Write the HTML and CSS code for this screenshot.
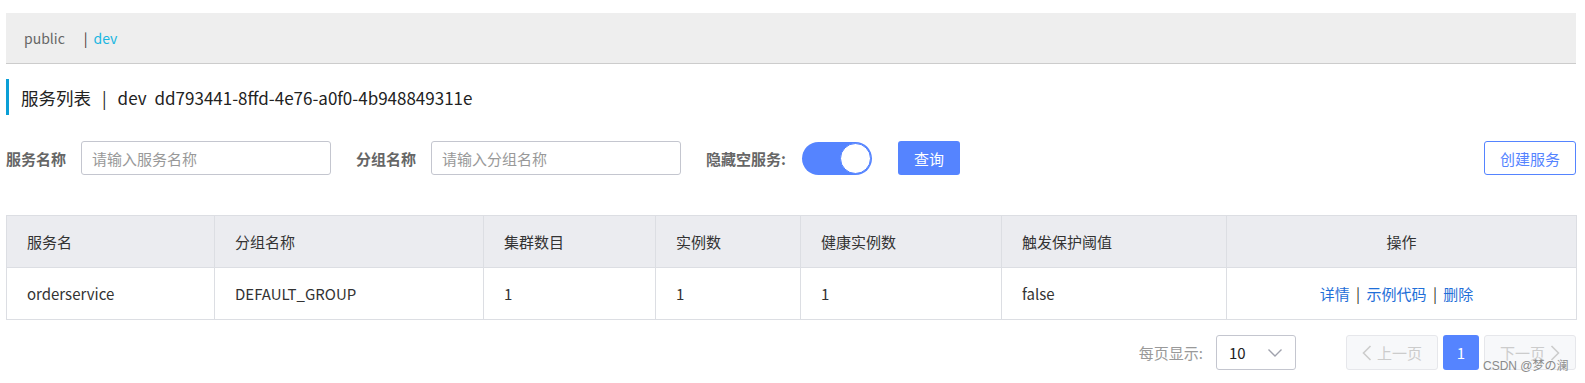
FILE: index.html
```html
<!DOCTYPE html>
<html lang="zh-CN">
<head>
    <meta charset="UTF-8">
    <meta name="viewport" content="width=device-width, initial-scale=1.0">
    <title>服务列表</title>
    <link rel="stylesheet" href="styles.css">
</head>
<body>

    <div class="page">
        <div class="ns-bar">
            <span class="ns-item">public</span>
            <span class="ns-sep">|</span>
            <span class="ns-item ns-active">dev</span>
        </div>

        <h1 class="page-title">
            <span class="title-main">服务列表</span>
            <span class="title-sep">|</span>
            <span class="title-ns">dev</span>
            <span class="title-id">dd793441-8ffd-4e76-a0f0-4b948849311e</span>
        </h1>

        <div class="filters">
            <span class="filter-label">服务名称</span>
            <input class="text-input" type="text" placeholder="请输入服务名称">
            <span class="filter-label">分组名称</span>
            <input class="text-input" type="text" placeholder="请输入分组名称">
            <span class="filter-label">隐藏空服务:</span>
            <span class="switch"><span class="switch-knob"></span></span>
            <button class="btn btn-primary">查询</button>
            <button class="btn btn-outline">创建服务</button>
        </div>

        <table class="service-table">
            <colgroup>
                <col style="width: 208px">
                <col style="width: 269px">
                <col style="width: 172px">
                <col style="width: 145px">
                <col style="width: 201px">
                <col style="width: 225px">
                <col style="width: 350px">
            </colgroup>
            <thead>
                <tr>
                    <th>服务名</th>
                    <th>分组名称</th>
                    <th>集群数目</th>
                    <th>实例数</th>
                    <th>健康实例数</th>
                    <th>触发保护阈值</th>
                    <th class="center">操作</th>
                </tr>
            </thead>
            <tbody>
                <tr>
                    <td>orderservice</td>
                    <td>DEFAULT_GROUP</td>
                    <td>1</td>
                    <td>1</td>
                    <td>1</td>
                    <td>false</td>
                    <td class="center actions">
                        <a href="#" class="link">详情</a>
                        <span class="link-sep">|</span>
                        <a href="#" class="link">示例代码</a>
                        <span class="link-sep">|</span>
                        <a href="#" class="link">删除</a>
                    </td>
                </tr>
            </tbody>
        </table>

        <div class="pager">
            <span class="pager-label">每页显示:</span>
            <div class="page-size">
                <span>10</span>
                <svg class="chevron" width="16" height="10" viewBox="0 0 16 10">
                    <path d="M1.5 1.5 L8 8 L14.5 1.5" fill="none" stroke="#a0a2ad" stroke-width="1.4"/>
                </svg>
            </div>
            <button class="page-btn page-nav" disabled>
                <svg width="10" height="16" viewBox="0 0 10 16"><path d="M8.5 1 L1.5 8 L8.5 15" fill="none" stroke="#ccc" stroke-width="1.6"/></svg>
                上一页
            </button>
            <button class="page-btn page-current">1</button>
            <button class="page-btn page-nav" disabled>
                下一页
                <svg width="10" height="16" viewBox="0 0 10 16"><path d="M1.5 1 L8.5 8 L1.5 15" fill="none" stroke="#ccc" stroke-width="1.6"/></svg>
            </button>
        </div>

        <div class="watermark">CSDN @梦の澜</div>
    </div>

</body>
</html>
```

FILE: styles.css
```css
body {
    margin: 0;
    font-family: "Noto Sans CJK SC", "Noto Sans", sans-serif;
    font-size: 14px;
    color: #333;
    background-color: #fff;
}
.page {
    position: relative;
    padding: 13px 9px 0 6px;
    height: 370px;
}
.ns-bar {
    height: 51px;
    background-color: #eeeeee;
    border-bottom: 1px solid #cccccc;
    display: flex;
    align-items: center;
    padding-left: 18px;
    box-sizing: border-box;
    font-size: 14px;
}
.ns-item {
    color: #666;
}
.ns-sep {
    color: #333;
    margin: 0 6px 0 19px;
}
.ns-active {
    color: #1ab6e1;
}
.page-title {
    margin: 15px 0 0 0;
    height: 36px;
    border-left: 3px solid #0a9fd6;
    padding-left: 12px;
    display: flex;
    align-items: center;
    font-size: 17px;
    font-weight: normal;
    color: #222;
}
.title-main {
    font-size: 17.5px;
}
.title-sep {
    margin: 0 11px 0 11px;
}
.title-ns {
    margin-right: 8px;
}
.filters {
    margin-top: 26px;
    display: flex;
    align-items: center;
    height: 34px;
}
.filter-label {
    font-weight: bold;
    color: #666;
    font-size: 15px;
    margin-right: 15px;
}
.text-input {
    width: 250px;
    height: 34px;
    box-sizing: border-box;
    border: 1px solid #c4c6cf;
    border-radius: 3px;
    padding: 0 10px;
    font-family: inherit;
    font-size: 15px;
    color: #333;
    margin-right: 25px;
}
.text-input::placeholder {
    color: #999;
}
.switch {
    width: 70px;
    height: 33px;
    border-radius: 17px;
    background-color: #5584ff;
    display: flex;
    justify-content: flex-end;
    align-items: center;
    box-sizing: border-box;
    padding-right: 1px;
    margin-left: 1px;
    margin-right: 26px;
}
.switch-knob {
    width: 29px;
    height: 29px;
    border-radius: 50%;
    background-color: #fff;
    border: 1px solid #5584ff;
}
.btn {
    height: 34px;
    border-radius: 3px;
    font-family: inherit;
    font-size: 15px;
    cursor: pointer;
    padding: 0;
}
.btn-primary {
    width: 62px;
    background-color: #5584ff;
    border: none;
    color: #fff;
}
.btn-outline {
    width: 92px;
    margin-left: auto;
    background-color: #fff;
    border: 1px solid #5584ff;
    color: #5584ff;
}
.service-table {
    margin-top: 40px;
    width: 1570px;
    border-collapse: collapse;
    table-layout: fixed;
}
.service-table th,
.service-table td {
    border: 1px solid #dcdee3;
    text-align: left;
    padding: 0 20px;
    font-size: 15px;
    color: #333;
}
.service-table th {
    background-color: #ebecf0;
    font-weight: normal;
    height: 51px;
}
.service-table td {
    height: 51px;
}
.service-table .center {
    text-align: center;
}
.service-table .actions {
    padding-right: 30px;
}
.link {
    color: #1f6fd8;
    text-decoration: none;
}
.link-sep {
    color: #333;
    margin: 0 3px;
}
.pager {
    margin-top: 15px;
    display: flex;
    align-items: center;
    justify-content: flex-end;
    height: 35px;
}
.pager-label {
    color: #999;
    font-size: 15px;
    margin-right: 13px;
}
.page-size {
    width: 80px;
    height: 35px;
    box-sizing: border-box;
    border: 1px solid #c4c6cf;
    border-radius: 3px;
    display: flex;
    align-items: center;
    justify-content: space-between;
    padding: 0 12px 0 12px;
    font-size: 15px;
    color: #222;
    margin-right: 50px;
}
.chevron {
    margin-top: 1px;
}
.page-btn {
    height: 35px;
    border-radius: 3px;
    font-family: inherit;
    font-size: 15px;
    padding: 0;
    display: flex;
    align-items: center;
    justify-content: center;
    gap: 5px;
}
.page-nav {
    width: 92px;
    background-color: #f7f8fa;
    border: 1px solid #e6e7eb;
    color: #ccc;
}
.page-current {
    width: 36px;
    margin: 0 5px;
    background-color: #5584ff;
    border: none;
    color: #fff;
}
.watermark {
    position: absolute;
    left: 1483px;
    top: 356px;
    font-size: 12px;
    color: #8a8a8a;
    font-family: "Liberation Sans", "Noto Sans CJK SC", sans-serif;
}
```
